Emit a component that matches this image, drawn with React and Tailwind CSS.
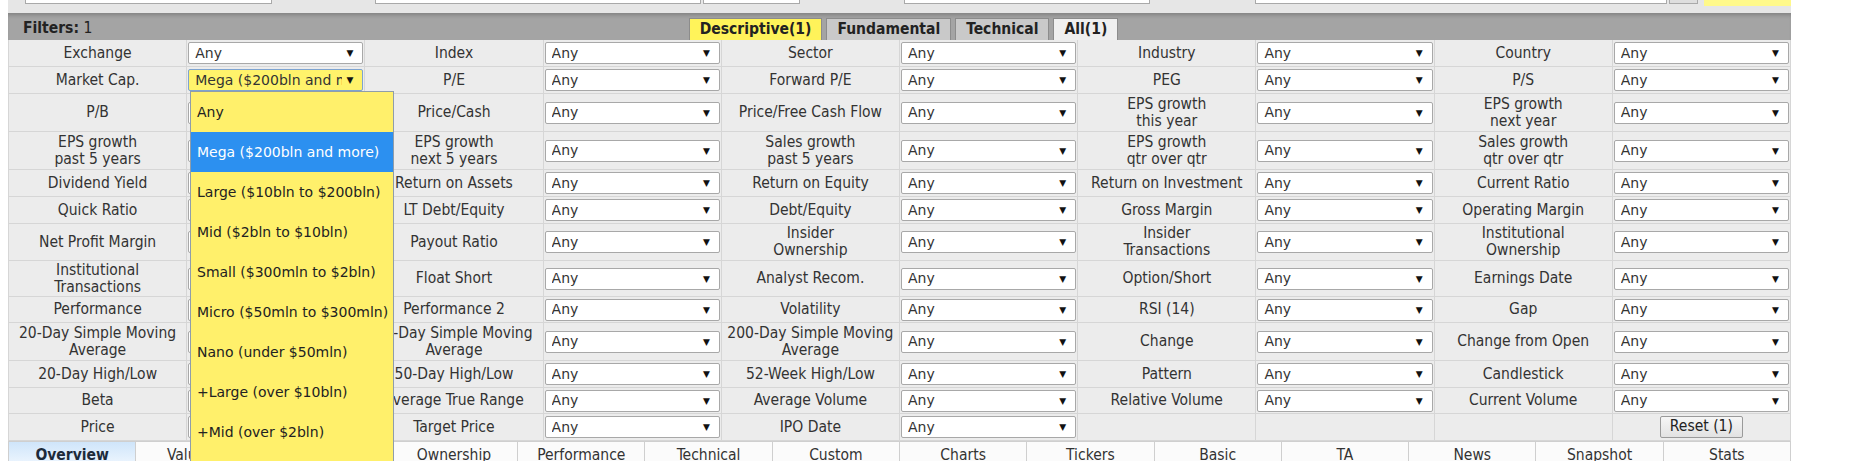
import React from 'react';

const FONT = "font-['DejaVu_Sans_Condensed','DejaVu_Sans',sans-serif]";

// each row: [height, labels] - a label is a list of lines
const ROWS = [
  [27, [['Exchange'], ['Index'], ['Sector'], ['Industry'], ['Country']]],
  [27, [['Market Cap.'], ['P/E'], ['Forward P/E'], ['PEG'], ['P/S']]],
  [38, [['P/B'], ['Price/Cash'], ['Price/Free Cash Flow'], ['EPS growth', 'this year'], ['EPS growth', 'next year']]],
  [38, [['EPS growth', 'past 5 years'], ['EPS growth', 'next 5 years'], ['Sales growth', 'past 5 years'], ['EPS growth', 'qtr over qtr'], ['Sales growth', 'qtr over qtr']]],
  [27, [['Dividend Yield'], ['Return on Assets'], ['Return on Equity'], ['Return on Investment'], ['Current Ratio']]],
  [27, [['Quick Ratio'], ['LT Debt/Equity'], ['Debt/Equity'], ['Gross Margin'], ['Operating Margin']]],
  [37, [['Net Profit Margin'], ['Payout Ratio'], ['Insider', 'Ownership'], ['Insider', 'Transactions'], ['Institutional', 'Ownership']]],
  [36, [['Institutional', 'Transactions'], ['Float Short'], ['Analyst Recom.'], ['Option/Short'], ['Earnings Date']]],
  [26, [['Performance'], ['Performance 2'], ['Volatility'], ['RSI (14)'], ['Gap']]],
  [38, [['20-Day Simple Moving', 'Average'], ['50-Day Simple Moving', 'Average'], ['200-Day Simple Moving', 'Average'], ['Change'], ['Change from Open']]],
  [27, [['20-Day High/Low'], ['50-Day High/Low'], ['52-Week High/Low'], ['Pattern'], ['Candlestick']]],
  [26, [['Beta'], ['Average True Range'], ['Average Volume'], ['Relative Volume'], ['Current Volume']]],
];

const MCAP = [
  'Any',
  'Mega ($200bln and more)',
  'Large ($10bln to $200bln)',
  'Mid ($2bln to $10bln)',
  'Small ($300mln to $2bln)',
  'Micro ($50mln to $300mln)',
  'Nano (under $50mln)',
  '+Large (over $10bln)',
  '+Mid (over $2bln)',
  '+Small (over $300mln)',
];

const VIEWS = ['Overview', 'Valuation', 'Financial', 'Ownership', 'Performance', 'Technical', 'Custom', 'Charts', 'Tickers', 'Basic', 'TA', 'News', 'Snapshot', 'Stats'];

function Select({ value = 'Any', active }) {
  return (
    <div
      className={`relative flex h-[22px] w-full min-w-0 items-center rounded-[2px] border pl-[6px] pr-[20px] font-['DejaVu_Sans',sans-serif] text-[14px] ${
        active ? 'border-[#7ea3d0] bg-[#fff36b]' : 'border-[#a8a8a8] bg-white'
      }`}
    >
      <span className="w-0 flex-1 overflow-hidden whitespace-nowrap">{value}</span>
      <span className="absolute right-[9px] top-[6px] text-[9px] leading-none text-[#111]">▼</span>
    </div>
  );
}

function Label({ lines }) {
  return (
    <div className="flex items-center justify-center border-b border-r border-[#d6d6d6] bg-[#ececec] text-center leading-[17px] whitespace-nowrap">
      <div>
        {lines.map((l) => (
          <div key={l}>{l}</div>
        ))}
      </div>
    </div>
  );
}

function SelectCell({ children }) {
  return (
    <div className="flex min-w-0 items-center overflow-hidden border-b border-r border-[#d6d6d6] bg-[#ececec] px-[1px]">
      {children}
    </div>
  );
}

function Tab({ children, bg }) {
  return (
    <div className={`flex h-[22px] items-center border border-b-0 border-[#8c8c8c] px-[10px] font-bold text-[#222] ${bg}`}>
      {children}
    </div>
  );
}

export default function App() {
  return (
    <div className={`h-[461px] w-[1850px] overflow-hidden bg-white text-[15.5px] text-[#333] ${FONT}`}>
      <div className="relative ml-[8px] w-[1783px]">
        {/* top strip with input bottoms */}
        <div className="flex h-[13px] items-start bg-[#e6e6e6]">
          <div className="ml-[17px] h-[4px] w-[247px] border-x border-b border-[#a9a9a9] bg-white" />
          <div className="ml-[103px] h-[4px] w-[326px] border-x border-b border-[#a9a9a9] bg-white" />
          <div className="ml-[2px] h-[4px] w-[97px] border-x border-b border-[#a9a9a9] bg-white" />
          <div className="ml-[104px] h-[4px] w-[246px] border-x border-b border-[#a9a9a9] bg-white" />
          <div className="ml-[105px] h-[4px] w-[412px] border-x border-b border-[#a9a9a9] bg-white" />
          <div className="ml-[2px] h-[4px] w-[29px] border-x border-b border-[#a9a9a9] bg-[#dedede]" />
          <div className="ml-[6px] h-[6px] flex-1 bg-[#fff98a]" />
        </div>

        {/* filters header */}
        <div className="relative flex h-[27px] items-end bg-[#a4a4a4] shadow-[inset_0_4px_4px_-2px_rgba(0,0,0,0.22)]">
          <div className="absolute left-[15px] top-[4px] text-[#222]">
            <b>Filters:</b> 1
          </div>
          <div className="mx-auto flex translate-x-[4px] gap-[4px]">
            <Tab bg="bg-[#fff35a]">Descriptive(1)</Tab>
            <Tab bg="bg-[#c9c9c9]">Fundamental</Tab>
            <Tab bg="bg-[#c9c9c9]">Technical</Tab>
            <Tab bg="bg-[#efefef]">All(1)</Tab>
          </div>
        </div>

        {/* filter grid */}
        <div className="grid grid-cols-10 border-l border-[#d6d6d6]">
          {ROWS.map(([h, cells], ri) =>
            cells.map((lines, ci) => (
              <React.Fragment key={`${ri}-${ci}`}>
                <div style={{ height: h }} className="grid min-w-0">
                  <Label lines={lines} />
                </div>
                <div style={{ height: h }} className="grid min-w-0 grid-cols-1">
                  <SelectCell>
                    {ri === 1 && ci === 0 ? <Select value="Mega ($200bln and more)" active /> : <Select />}
                  </SelectCell>
                </div>
              </React.Fragment>
            ))
          )}
          <div className="grid h-[27px]"><Label lines={['Price']} /></div>
          <div className="grid h-[27px]"><SelectCell><Select /></SelectCell></div>
          <div className="grid h-[27px]"><Label lines={['Target Price']} /></div>
          <div className="grid h-[27px]"><SelectCell><Select /></SelectCell></div>
          <div className="grid h-[27px]"><Label lines={['IPO Date']} /></div>
          <div className="grid h-[27px]"><SelectCell><Select /></SelectCell></div>
          <div className="grid h-[27px]"><Label lines={[]} /></div>
          <div className="grid h-[27px]"><Label lines={[]} /></div>
          <div className="grid h-[27px]"><Label lines={[]} /></div>
          <div className="grid h-[27px]">
            <div className="flex items-center justify-center border-b border-r border-[#d6d6d6] bg-[#ececec]">
              <button className="h-[22px] rounded-[2px] border border-[#9a9a9a] bg-linear-to-b from-[#f6f6f6] to-[#e2e2e2] px-[9px] leading-none text-[#222]">
                Reset (1)
              </button>
            </div>
          </div>
        </div>

        {/* view tabs */}
        <div className="grid grid-cols-14 border-l border-[#cfcfcf]">
          {VIEWS.map((v, i) => (
            <div
              key={v}
              className={`flex h-[24px] justify-center border-r border-t border-[#cfcfcf] pt-[2px] ${
                i === 0 ? 'bg-linear-to-b from-[#cfe5fa] to-[#eef6fe] font-bold text-[#1d2b3a]' : 'bg-[#fbfbfb]'
              }`}
            >
              {v}
            </div>
          ))}
        </div>

        {/* open market cap list */}
        <div className="absolute left-[182px] top-[91px] w-[204px] border border-[#8f9daa] bg-[#fff06b] font-['DejaVu_Sans',sans-serif] text-[14px] text-[#222]">
          {MCAP.map((m, i) => (
            <div
              key={m}
              className={`flex h-[40px] items-center whitespace-nowrap pl-[6px] ${i === 1 ? 'bg-[#2c90f0] text-white' : ''}`}
            >
              {m}
            </div>
          ))}
        </div>
      </div>
    </div>
  );
}
